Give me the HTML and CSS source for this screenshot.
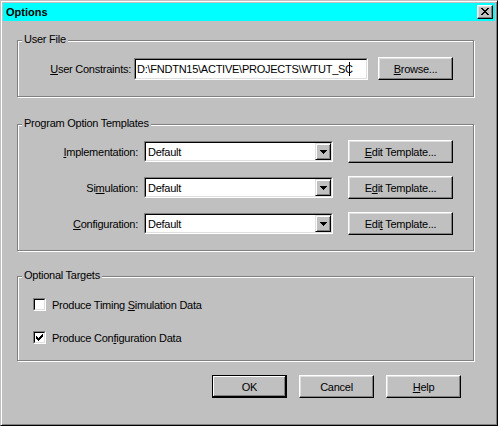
FILE: index.html
```html
<!DOCTYPE html>
<html>
<head>
<meta charset="utf-8">
<title>Options</title>
<link rel="stylesheet" href="styles.css">
</head>
<body>
<div class="window">
  <div class="titlebar">
    <span class="title">Options</span>
    <div class="close">
      <svg width="8" height="7" viewBox="0 0 8 7" shape-rendering="crispEdges"><path fill="#000" d="M0 0h2v1h-2z M6 0h2v1h-2z M1 1h2v1h-2z M5 1h2v1h-2z M2 2h4v1h-4z M3 3h2v1h-2z M2 4h4v1h-4z M1 5h2v1h-2z M5 5h2v1h-2z M0 6h2v1h-2z M6 6h2v1h-2z"/></svg>
    </div>
  </div>
  <div class="client">
    <div class="group g1">
      <div class="legend">User File</div>
      <div class="row">
        <div class="lbl"><u>U</u>ser Constraints:</div>
        <div class="field edit"><div class="inner"><span class="val">D:\FNDTN15\ACTIVE\PROJECTS\WTUT_SC</span><span class="caret"></span></div></div>
        <div class="btn browse"><span><u>B</u>rowse...</span></div>
      </div>
    </div>

    <div class="group g2">
      <div class="legend">Program Option Templates</div>
      <div class="rows">
        <div class="row">
          <div class="lbl"><u>I</u>mplementation:</div>
          <div class="field combo"><div class="inner"><span class="val">Default</span><div class="drop"><svg width="7" height="4" viewBox="0 0 7 4" shape-rendering="crispEdges"><path fill="#000" d="M0 0h7v1h-7z M1 1h5v1h-5z M2 2h3v1h-3z M3 3h1v1h-1z"/></svg></div></div></div>
          <div class="btn tbtn"><span><u>E</u>dit Template...</span></div>
        </div>
        <div class="row">
          <div class="lbl">Si<u>m</u>ulation:</div>
          <div class="field combo"><div class="inner"><span class="val">Default</span><div class="drop"><svg width="7" height="4" viewBox="0 0 7 4" shape-rendering="crispEdges"><path fill="#000" d="M0 0h7v1h-7z M1 1h5v1h-5z M2 2h3v1h-3z M3 3h1v1h-1z"/></svg></div></div></div>
          <div class="btn tbtn"><span>E<u>d</u>it Template...</span></div>
        </div>
        <div class="row">
          <div class="lbl"><u>C</u>onfiguration:</div>
          <div class="field combo"><div class="inner"><span class="val">Default</span><div class="drop"><svg width="7" height="4" viewBox="0 0 7 4" shape-rendering="crispEdges"><path fill="#000" d="M0 0h7v1h-7z M1 1h5v1h-5z M2 2h3v1h-3z M3 3h1v1h-1z"/></svg></div></div></div>
          <div class="btn tbtn"><span>Edi<u>t</u> Template...</span></div>
        </div>
      </div>
    </div>

    <div class="group g3">
      <div class="legend">Optional Targets</div>
      <div class="checks">
        <div class="check">
          <div class="cb"><div class="cbi"></div></div>
          <span class="ctext">Produce Timing <u>S</u>imulation Data</span>
        </div>
        <div class="check">
          <div class="cb"><div class="cbi"><svg width="7" height="7" viewBox="0 0 7 7" shape-rendering="crispEdges"><path fill="#000" d="M6 0h1v1h-1z M5 1h2v1h-2z M0 2h1v1h-1z M4 2h3v1h-3z M0 3h2v1h-2z M3 3h3v1h-3z M0 4h5v1h-5z M1 5h3v1h-3z M2 6h1v1h-1z"/></svg></div></div>
          <span class="ctext">Produce Con<u>f</u>iguration Data</span>
        </div>
      </div>
    </div>

    <div class="footer">
      <div class="btn default"><span>OK</span></div>
      <div class="btn"><span>Cancel</span></div>
      <div class="btn"><span><u>H</u>elp</span></div>
    </div>
  </div>
</div>
</body>
</html>
```
FILE: styles.css
```css
* { box-sizing: border-box; }
html, body { margin: 0; padding: 0; }
body {
  width: 498px;
  height: 426px;
  overflow: hidden;
  background: #c0c0c0;
  font-family: "Liberation Sans", Arial, sans-serif;
  font-size: 11px;
  letter-spacing: -0.25px;
  color: #000;
}
u { text-decoration: underline; text-underline-offset: 1px; }

.window {
  width: 498px;
  height: 426px;
  border: 1px solid;
  border-color: #c0c0c0 #000 #000 #c0c0c0;
  box-shadow: inset 1px 1px #fff, inset -1px -1px #808080;
  padding: 2px;
  background: #c0c0c0;
}

.titlebar {
  height: 18px;
  background: #00ffff;
  display: flex;
  align-items: center;
  justify-content: space-between;
  padding: 0 2px 0 3px;
}
.title { font-weight: bold; letter-spacing: 0; line-height: 18px; }
.close {
  width: 16px;
  height: 14px;
  border: 1px solid;
  border-color: #fff #000 #000 #fff;
  box-shadow: inset -1px -1px #808080, inset 1px 1px #dfdfdf;
  background: #c0c0c0;
  padding: 2px 0 0 3px;
}
.close svg { display: block; }

.client { padding: 0 21px 0 14px; }

.group {
  border: 1px solid #808080;
  box-shadow: inset 1px 1px #fff, 1px 1px #fff;
}
.g1 { margin-top: 19px; height: 57px; }
.g2 { margin-top: 27px; height: 127px; }
.g3 { margin-top: 25px; height: 85px; }

.legend {
  width: fit-content;
  height: 13px;
  line-height: 13px;
  margin: -8px 0 0 4px;
  padding: 0 2px;
  background: #c0c0c0;
}

.row { display: flex; align-items: center; height: 23px; }
.g1 .row { margin-top: 11px; }
.lbl { flex: none; text-align: right; white-space: nowrap; }
.g1 .lbl { width: 113px; margin-right: 3px; }

.field {
  flex: none;
  border: 1px solid;
  border-color: #808080 #fff #fff #808080;
}
.field .inner {
  height: 100%;
  border: 1px solid;
  border-color: #000 #dfdfdf #dfdfdf #000;
  background: #fff;
  display: flex;
  align-items: center;
  overflow: hidden;
}
.val { white-space: nowrap; padding-left: 1px; flex: 1; overflow: hidden; }
.edit { width: 234px; height: 22px; margin-right: 10px; }
.edit .val { flex: none; }
.caret { flex: none; width: 1px; height: 14px; background: #000; margin-left: -4px; }

.combo { width: 189px; height: 21px; margin-right: 15px; }
.combo .val { padding-left: 2px; }
.drop {
  flex: none;
  width: 16px;
  height: 17px;
  border: 1px solid;
  border-color: #dfdfdf #000 #000 #dfdfdf;
  box-shadow: inset 1px 1px #fff, inset -1px -1px #808080;
  background: #c0c0c0;
  display: flex;
  align-items: center;
  justify-content: center;
}
.drop svg { display: block; margin-top: 1px; }

.btn {
  flex: none;
  display: flex;
  align-items: center;
  justify-content: center;
  height: 23px;
  border: 1px solid;
  border-color: #fff #000 #000 #fff;
  box-shadow: inset -1px -1px #808080, inset 1px 1px #dfdfdf;
  background: #c0c0c0;
  white-space: nowrap;
}
.btn.default {
  border-color: #000;
  box-shadow: inset -1px -1px #000, inset 1px 1px #fff, inset -2px -2px #808080;
}
.browse { width: 75px; }
.tbtn { width: 105px; }

.rows { display: flex; flex-direction: column; gap: 13px; margin-top: 10px; }
.g2 .lbl { width: 120px; margin-right: 6px; }

.checks {
  margin-top: 16px;
  padding-left: 15px;
  display: flex;
  flex-direction: column;
  gap: 20px;
}
.check { display: flex; align-items: center; height: 13px; }
.cb {
  flex: none;
  width: 13px;
  height: 13px;
  border: 1px solid;
  border-color: #808080 #fff #fff #808080;
}
.cbi {
  width: 11px;
  height: 11px;
  border: 1px solid;
  border-color: #000 #dfdfdf #dfdfdf #000;
  background: #fff;
  padding: 1px;
}
.cbi svg { display: block; }
.ctext { margin-left: 6px; white-space: nowrap; }

.footer {
  display: flex;
  justify-content: flex-end;
  gap: 12px;
  margin-top: 14px;
  padding-right: 13px;
}
.footer .btn { width: 75px; }
```
